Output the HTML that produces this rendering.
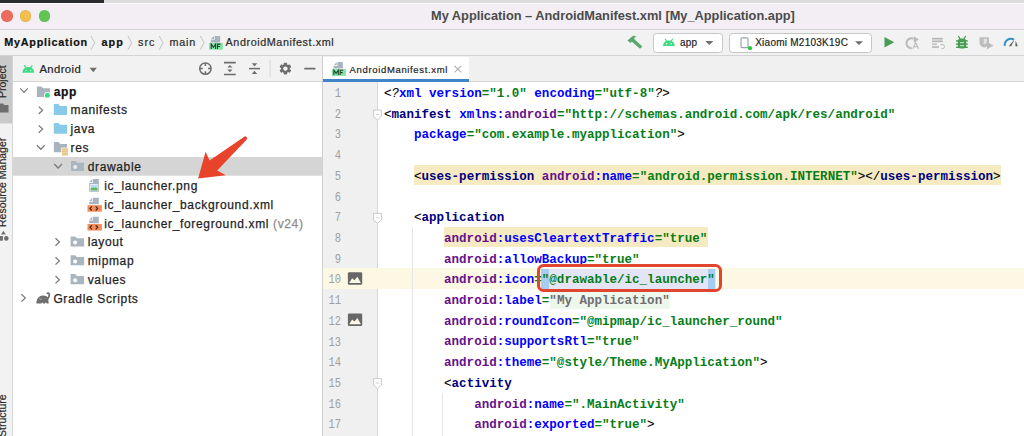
<!DOCTYPE html>
<html><head><meta charset="utf-8">
<style>
*{box-sizing:border-box;margin:0;padding:0}
html,body{width:1024px;height:436px;overflow:hidden;background:#fff;font-family:"Liberation Sans",sans-serif}
.a{position:absolute}
.t{position:absolute;white-space:pre;line-height:1}
#topdark{left:0;top:0;width:104px;height:3px;background:#2a2c30}
#toplight{left:104px;top:0;width:920px;height:3px;background:#dcdcdc}
#title{left:0;top:3px;width:1024px;height:26px;background:#f2eef4;border-top:1px solid #fbfafc}
.dot{position:absolute;width:11.5px;height:11.5px;border-radius:50%;top:10.1px;box-shadow:inset 0 0 0 0.5px rgba(0,0,0,0.08)}
#tb{left:0;top:29px;width:1024px;height:27px;background:#f2f2f2;border-top:1px solid #d6d4d8;border-bottom:1px solid #d4d4d4}
.crumb{font-size:10.8px;letter-spacing:0.57px;color:#2b2b2b;-webkit-text-stroke-width:0.2px}
.chev{position:absolute;width:6px;height:14px}
.dd{position:absolute;top:32.5px;height:20.2px;background:#fff;border:1px solid #c6c6c6;border-radius:3.5px}
#side{left:0;top:56px;width:13px;height:380px;background:#f2f2f2;border-right:1px solid #d6d6d6}
#panelhdr{left:13px;top:56px;width:310px;height:25.5px;background:#f2f2f2;border-bottom:1px solid #d4d4d4}
#tree{left:13px;top:81.5px;width:309px;height:355px;background:#fff}
#sep{left:322px;top:56px;width:1px;height:380px;background:#d0d0d0}
#tabbar{left:323px;top:56px;width:701px;height:26px;background:#f0f0f0;border-bottom:1px solid #d4d4d4}
#tab{left:323px;top:56.5px;width:146.3px;height:25.3px;background:#fff}
#tabul{left:323px;top:78.8px;width:146.3px;height:3px;background:#4083c9}
#gutter{left:323px;top:82px;width:54.5px;height:354px;background:#f0f0f0;border-right:1px solid #d6d6d6}
.ln{position:absolute;left:323px;width:18.1px;text-align:right;font-family:"Liberation Mono",monospace;font-size:12px;margin-top:0.2px;transform:scaleX(0.87);transform-origin:100% 50%;color:#9e9e9e;white-space:pre;line-height:1}
.code{position:absolute;left:383.9px;font-family:"Liberation Mono",monospace;font-size:12.545px;font-weight:bold;white-space:pre;line-height:1;color:#000}
.p{font-weight:normal;-webkit-text-stroke-width:0.1px}
.tg{color:#000080;font-weight:bold}
.at{color:#0000ff}
.ns{color:#67108a;font-weight:bold}
.vl{color:#067d17;font-weight:bold}
.gr{color:#6e6e6e}
.tree{font-size:12px;letter-spacing:0.65px;color:#1f1f1f;-webkit-text-stroke-width:0.25px}
</style></head><body>
<div class="a" id="topdark"></div>
<div class="a" id="toplight"></div>
<div class="a" id="title">
</div>
<div class="dot" style="left:1px;background:#ed6a5e"></div>
<div class="dot" style="left:19.8px;background:#f4bf4f"></div>
<div class="dot" style="left:38.6px;background:#61c554"></div>
<div class="t" style="left:431px;top:10.2px;font-size:12.8px;font-weight:bold;color:#4b4b4b">My Application – AndroidManifest.xml [My_Application.app]</div>

<div class="a" id="tb"></div>

<!--TOOLBAR-->
<div class="dd" style="left:653.1px;width:69.5px"></div>
<div class="dd" style="left:728.6px;width:143.3px"></div>
<div class="t" style="left:680px;top:37.8px;font-size:10px;letter-spacing:0.25px;color:#1f1f1f;-webkit-text-stroke-width:0.2px">app</div>
<div class="t" style="left:755.2px;top:38.2px;font-size:10px;letter-spacing:0.25px;color:#1f1f1f;-webkit-text-stroke-width:0.2px">Xiaomi M2103K19C</div>

<div class="t crumb" style="left:4.3px;top:36.8px;font-weight:bold;color:#111;letter-spacing:0.75px">MyApplication</div>
<div class="t crumb" style="left:101.4px;top:36.8px;font-weight:bold;color:#111;letter-spacing:1.1px">app</div>
<div class="t crumb" style="left:138.1px;top:36.8px;letter-spacing:0.9px">src</div>
<div class="t crumb" style="left:169.4px;top:36.8px;letter-spacing:0.85px">main</div>
<div class="t crumb" style="left:225.6px;top:36.8px">AndroidManifest.xml</div>
<svg class="a" style="left:0;top:0" width="1024" height="436" viewBox="0 0 1024 436">
 <g fill="none" stroke="#bfc3c7" stroke-width="1">
  <path d="M90.9,36 L94.7,42.8 L90.9,49.7"/>
  <path d="M127.9,36 L131.7,42.8 L127.9,49.7"/>
  <path d="M159.3,36 L163.1,42.8 L159.3,49.7"/>
  <path d="M200.3,36 L204.1,42.8 L200.3,49.7"/>
 </g>
 <!-- MF icon breadcrumb -->
 <g>
  <path d="M214.70,35.90 H220.20 V42.40 H210.90 V39.80 H214.70 Z" fill="#a9b4be"/>
  <path d="M210.90,39.10 L214.00,36.10 V39.10 Z" fill="#a9b4be"/>
  <rect x="209.1" y="43.0" width="13.8" height="6.7" fill="#84e2a7"/>
  <path d="M211.20,49.00 V44.10 L213.40,47.30 L215.60,44.10 V49.00 M217.50,49.00 V44.10 H220.50 M217.50,46.50 H220.00" fill="none" stroke="#24462e" stroke-width="1.1"/>
 </g>
 <!-- hammer -->
 <path d="M627.3,40.4 L633.2,35.7 L636.1,36.1 L630.6,43.1 Z" fill="#59a869"/>
 <path d="M632.6,37.5 L642.3,46.5 L640,48.8 L630.2,40.3 Z" fill="#59a869"/>
 <!-- android app icon -->
 <g fill="#3ddc84">
  <path d="M663.1,46 C663.1,42.6 665.5,40.5 668.9,40.5 C672.3,40.5 674.7,42.6 674.7,46 Z"/>
  <path d="M665.3,39.1 L666.7,41.3" stroke="#3ddc84" stroke-width="1.1" stroke-linecap="round"/>
  <path d="M672.5,39.1 L671.1,41.3" stroke="#3ddc84" stroke-width="1.1" stroke-linecap="round"/>
 </g>
 <circle cx="666.6" cy="43.8" r="0.75" fill="#fff"/>
 <circle cx="671.2" cy="43.8" r="0.75" fill="#fff"/>
 <path d="M705.2,40.9 H713.4 L709.3,45 Z" fill="#6e6e6e"/>
 <!-- phone icon -->
 <rect x="741" y="37.9" width="7" height="9.8" rx="1.3" fill="#fff" stroke="#9aa7b0" stroke-width="1.2"/>
 <circle cx="750" cy="48.2" r="2.1" fill="#1fcf35"/>
 <path d="M855,41.3 H863 L859,45.1 Z" fill="#6e6e6e"/>

 <!-- apply changes -->
 <path d="M911.8,48.2 A5,5 0 1 1 913.6,38.7" fill="none" stroke="#bababa" stroke-width="2"/>
 <path d="M913.9,36.2 L918.8,39.6 L913.9,42.8 Z" fill="#bababa"/>
 <path d="M912.9,48.8 L915.7,42.6 L918.5,48.8 M914,46.8 H917.4" fill="none" stroke="#bababa" stroke-width="1.1"/>
 <!-- apply code changes -->
 <rect x="932" y="37.9" width="10.7" height="4.2" fill="#d2d2d2"/>
 <rect x="932" y="37.9" width="10.7" height="1.1" fill="#b5b5b5"/>
 <rect x="932" y="41" width="10.7" height="1.1" fill="#b5b5b5"/>
 <rect x="932" y="43.5" width="4.9" height="1.3" fill="#b5b5b5"/>
 <rect x="932" y="46.2" width="7" height="1.6" fill="#b5b5b5"/>
 <path d="M940.3,44.6 H943 A2,2 0 0 1 943,48.5 H941.5" fill="none" stroke="#bdbdbd" stroke-width="1"/>
 <!-- debug bug -->
 <g fill="#499c54">
  <rect x="957.8" y="38.6" width="8.4" height="10" rx="3"/>
  <rect x="956" y="40.2" width="11.8" height="1.4"/>
  <rect x="956" y="43.4" width="11.8" height="1.4"/>
  <rect x="956" y="46.6" width="11.8" height="1.4"/>
  <path d="M958.4,36 L960,38.8 M965.6,36 L964,38.8" stroke="#499c54" stroke-width="1.3"/>
 </g>
 <rect x="960" y="42.2" width="4" height="1" fill="#cfe6d2"/>
 <rect x="960" y="45.2" width="4" height="1" fill="#cfe6d2"/>
 <!-- attach -->
 <path d="M979.6,37.2 H989 V43 C989,45.5 986.5,47 984.3,47.6 C982,47 979.6,45.5 979.6,43 Z" fill="#bcbcbc"/>
 <path d="M983.6,38.8 H987 V42 L985.5,44 H983.6 Z" fill="#e2e2e2"/>
 <path d="M986.9,41.9 L993.5,45.6 L986.9,49.4 Z" fill="#bcbcbc"/>
 <!-- profiler -->
 <path d="M1004.8,46 A6.3,6.3 0 0 1 1014,39.5" fill="none" stroke="#3592c4" stroke-width="2"/>
 <path d="M1008.8,46.2 L1014.6,39.3 L1011.2,46.2 Z" fill="#5e5e5e"/>
 <path d="M1015.6,40.8 L1017.8,46.2 H1015.4 Z" fill="#5e5e5e"/>
 <!-- run -->
 <path d="M884.5,37 L894.2,42.3 L884.5,47.6 Z" fill="#499c54"/>
</svg>
<div class="a" id="side"></div>
<div class="a" id="panelhdr"></div>
<div class="a" id="tree"></div>
<div class="a" id="sep"></div>
<div class="a" id="tabbar"></div>
<div class="a" id="tab"></div>
<div class="a" id="tabul"></div>
<div class="a" id="gutter"></div>
<svg class="a" style="left:0;top:0" width="1024" height="436" viewBox="0 0 1024 436">
 <!-- sidebar -->
 <rect x="0" y="56" width="12.2" height="67.4" fill="#c9c9c9"/>
 <path d="M0,103.6 H3 L4.2,104.9 H8.5 V112.4 H0 Z" fill="#6e6e6e"/>
 <path d="M1,234.6 L3.4,230.8 L5.8,234.6 Z" fill="#6e6e6e"/>
 <rect x="0" y="236" width="2.9" height="4.7" fill="#6e6e6e"/>
 <circle cx="6.3" cy="238.4" r="2.3" fill="#6e6e6e"/>
 <!-- panel header icons -->
 <g fill="#3ddc84">
  <path d="M22.5,72.8 C22.5,69.3 25,67.1 28.3,67.1 C31.6,67.1 34.1,69.3 34.1,72.8 Z"/>
  <path d="M24.6,65.6 L26,67.9 M32,65.6 L30.6,67.9" stroke="#3ddc84" stroke-width="1.2" stroke-linecap="round"/>
 </g>
 <circle cx="26" cy="70.4" r="0.75" fill="#c5f3d9"/>
 <circle cx="30.6" cy="70.4" r="0.75" fill="#c5f3d9"/>
 <path d="M89.6,67.7 H96.9 L93.25,72.3 Z" fill="#6e6e6e"/>
 <g fill="none" stroke="#6e6e6e" stroke-width="1.3">
  <circle cx="205.4" cy="68.6" r="5.7" stroke-width="1.5"/>
  <path d="M205.4,63 V66 M205.4,71.2 V74.2 M199.8,68.6 H202.8 M208,68.6 H211" stroke-width="1.5"/>
  <path d="M224,62.6 H235.8 M224,74.5 H235.8" stroke-width="1.7"/>
  <path d="M249,68.6 H260" stroke-width="1.5"/>
 </g>
 <g fill="#6e6e6e">
  <path d="M227.3,67.6 L229.9,64.9 L232.5,67.6 Z"/>
  <path d="M227.3,69.6 L229.9,72.3 L232.5,69.6 Z"/>
  <path d="M251.8,63.2 L257.2,63.2 L254.5,66.4 Z"/>
  <path d="M251.8,74 L257.2,74 L254.5,70.8 Z"/>
 </g>
 <rect x="269.6" y="59.8" width="1" height="17.8" fill="#d8d8d8"/>
 <g transform="translate(285.4,68.6)" fill="#6e6e6e">
  <circle r="4.3"/>
  <rect x="-1.7" y="-5.9" width="3.4" height="11.8" rx="0.8"/><rect x="-1.7" y="-5.9" width="3.4" height="11.8" rx="0.8" transform="rotate(60)"/><rect x="-1.7" y="-5.9" width="3.4" height="11.8" rx="0.8" transform="rotate(120)"/>
  <circle r="2.2" fill="#f2f2f2"/>
 </g>
 <rect x="304.2" y="67.8" width="11.3" height="1.7" rx="0.6" fill="#6e6e6e"/>
 <!-- tab MF icon -->
 <g>
  <path d="M337.40,62.00 H342.90 V68.50 H333.60 V65.90 H337.40 Z" fill="#a9b4be"/>
  <path d="M333.60,65.20 L336.70,62.20 V65.20 Z" fill="#a9b4be"/>
  <rect x="331.8" y="69.1" width="14.1" height="6.8" fill="#84e2a7"/>
  <path d="M333.90,75.10 V70.20 L336.10,73.40 L338.30,70.20 V75.10 M340.20,75.10 V70.20 H343.20 M340.20,72.60 H342.70" fill="none" stroke="#24462e" stroke-width="1.1"/>
 </g>
 <path d="M454.5,66 L461.2,72.3 M461.2,66 L454.5,72.3" stroke="#b3b3b3" stroke-width="1.1"/>
 <!-- tree selection -->
 <rect x="13" y="157" width="309" height="18.7" fill="#d5d5d5"/>
 <!-- chevrons -->
 <g fill="none" stroke="#7a7a7a" stroke-width="1.25">
  <path d="M20.3,88.4 L24,92.4 L27.7,88.4"/>
  <path d="M38.7,106.6 L42.6,110.3 L38.7,114"/>
  <path d="M38.7,125.4 L42.6,129.1 L38.7,132.8"/>
  <path d="M36.9,145.3 L40.8,149.3 L44.7,145.3"/>
  <path d="M54.2,164 L58.1,168 L62,164"/>
  <path d="M55.5,238.3 L59.4,242 L55.5,245.7"/>
  <path d="M55.5,257.2 L59.4,260.9 L55.5,264.6"/>
  <path d="M55.5,276 L59.4,279.7 L55.5,283.4"/>
  <path d="M21.3,294.2 L25.3,297.9 L21.3,301.6"/>
 </g>
 <!-- folders -->
 <path d="M36.9,86.6 H41.5 L43,88.2 H50 V96.9 H36.9 Z" fill="#a8b3bd"/>
 <circle cx="47.4" cy="95.3" r="3.4" fill="#fff"/>
 <circle cx="47.4" cy="95.3" r="2.5" fill="#3ddc84"/>
 <path d="M53.8,104.1 H58.4 L60.1,105.9 H67 V114.9 H53.8 Z" fill="#88cbe8"/>
 <path d="M53.8,122.95 H58.4 L60.1,124.75 H67 V133.75 H53.8 Z" fill="#88cbe8"/>
 <path d="M53.9,142.1 H58.5 L60.2,143.9 H67 V152.2 H53.9 Z" fill="#a8b3bd"/>
 <rect x="61.2" y="147.6" width="7.4" height="8.5" fill="#fff"/>
 <rect x="61.9" y="148.3" width="6" height="7.1" fill="#e9c27b"/>
 <path d="M61.9,150.6 H67.9 M61.9,152.9 H67.9" stroke="#f6e6c6" stroke-width="0.7"/>
 <g fill="#a9b5bf">
  <path d="M70.9,160.9 H75.5 L77.2,162.7 H84 V171 H70.9 Z"/>
  <path d="M70.6,236.4 H75.2 L76.9,238.2 H84.1 V246.5 H70.6 Z"/>
  <path d="M70.6,255.25 H75.2 L76.9,257.05 H84.1 V265.35 H70.6 Z"/>
  <path d="M70.6,274.1 H75.2 L76.9,275.9 H84.1 V284.2 H70.6 Z"/>
 </g>
 <g fill="#fff">
  <circle cx="75.2" cy="167.1" r="2" fill="#e9ecee"/>
  <circle cx="75.1" cy="242.6" r="2"/>
  <circle cx="75.1" cy="261.45" r="2"/>
  <circle cx="75.1" cy="280.3" r="2"/>
 </g>
 <!-- png icon -->
 <path d="M92.9,179.1 H98.8 V191.7 H89.2 V182.9 H92.9 Z" fill="#a9b4be"/>
 <path d="M89.2,182.2 L92.2,179.3 V182.2 Z" fill="#a9b4be"/>
 <rect x="90.2" y="184" width="7.6" height="6.9" fill="#f4f6f7"/>
 <rect x="90.8" y="184.7" width="6.7" height="5.7" fill="#b5def0"/>
 <path d="M90.8,190.4 V188.6 C91.8,187.6 93,187.2 94.2,188 C95.3,187.2 96.5,187.4 97.5,188.2 V190.4 Z" fill="#62b85a"/>
 <!-- xml icons -->
 <g>
  <path d="M92.90,197.80 H98.80 V204.30 H89.20 V201.70 H92.90 Z" fill="#a9b4be"/>
  <path d="M89.20,201.00 L92.20,198.00 V201.00 Z" fill="#a9b4be"/>
  <rect x="87.5" y="205.2" width="14.4" height="6.5" fill="#f28b5b"/>
  <path d="M91.90,206.40 L89.90,208.45 L91.90,210.50 M95.70,206.40 L97.70,208.45 L95.70,210.50" fill="none" stroke="#4a220f" stroke-width="1.1"/>
 </g>
 <g>
  <path d="M92.90,216.65 H98.80 V223.15 H89.20 V220.55 H92.90 Z" fill="#a9b4be"/>
  <path d="M89.20,219.85 L92.20,216.85 V219.85 Z" fill="#a9b4be"/>
  <rect x="87.5" y="224.05" width="14.4" height="6.5" fill="#f28b5b"/>
  <path d="M91.90,225.25 L89.90,227.30 L91.90,229.35 M95.70,225.25 L97.70,227.30 L95.70,229.35" fill="none" stroke="#4a220f" stroke-width="1.1"/>
 </g>
 <!-- gradle elephant -->
 <path d="M36.4,303.6 C36.4,299 38.8,295.7 42.6,295.5 C45.2,295.4 46.9,296.2 48,297.4 L48.7,303.6 L46.8,303.6 L45.9,302.2 L45,303.6 L43.1,303.6 L42.2,302.2 L41.3,303.6 Z" fill="#6d6d6d"/>
 <path d="M47.2,299.5 C48.5,297.5 49.6,295.8 49.3,294.3 C49,293 47.6,292.8 46.9,293.9" fill="none" stroke="#6d6d6d" stroke-width="1.7"/>
 <path d="M39.3,298.6 L40.6,299.4 L41.8,298.6 M45,298 L45.4,298.6" fill="none" stroke="#d9d9d9" stroke-width="0.7"/>
 <!-- arrow -->
 <path d="M198.1,178.4 L205.6,151.8 L209.6,160.6 L243.9,136.9 A1.95,1.95 0 0 1 246.5,139.8 L217.2,170.4 L225.8,175.2 Z" fill="#e8432b"/>
</svg>
<div class="t tree" style="left:53.8px;top:85.54px;font-weight:bold;color:#111;letter-spacing:0.6px;">app</div>
<div class="t tree" style="left:70.5px;top:104.40px;">manifests</div>
<div class="t tree" style="left:70.5px;top:123.25px;">java</div>
<div class="t tree" style="left:70.5px;top:142.11px;">res</div>
<div class="t tree" style="left:87.7px;top:160.96px;">drawable</div>
<div class="t tree" style="left:104.2px;top:179.82px;">ic_launcher.png</div>
<div class="t tree" style="left:104.2px;top:198.67px;">ic_launcher_background.xml</div>
<div class="t tree" style="left:104.2px;top:217.53px;">ic_launcher_foreground.xml</div>
<div class="t tree" style="left:87.7px;top:236.38px;">layout</div>
<div class="t tree" style="left:87.7px;top:255.24px;">mipmap</div>
<div class="t tree" style="left:87.7px;top:274.09px;">values</div>
<div class="t tree" style="left:53.4px;top:292.95px;">Gradle Scripts</div>
<div class="t tree" style="left:273px;top:217.53px;color:#8c8c8c">(v24)</div>
<div class="t" style="left:39.4px;top:64px;font-size:11.3px;letter-spacing:0.4px;color:#1f1f1f;-webkit-text-stroke-width:0.2px">Android</div>
<div class="t" style="left:349.6px;top:65.2px;font-size:9.5px;letter-spacing:0.65px;color:#1f1f1f;-webkit-text-stroke-width:0.2px">AndroidManifest.xml</div>
<div class="t" style="left:-3.3px;top:98px;font-size:10.5px;color:#2b2b2b;-webkit-text-stroke-width:0.2px;transform:rotate(-90deg);transform-origin:0 0">Project</div>
<div class="t" style="left:-3.3px;top:227px;font-size:10.5px;color:#2b2b2b;-webkit-text-stroke-width:0.2px;transform:rotate(-90deg);transform-origin:0 0">Resource Manager</div>
<div class="t" style="left:-3.3px;top:437.3px;font-size:10.5px;color:#2b2b2b;-webkit-text-stroke-width:0.2px;transform:rotate(-90deg);transform-origin:0 0">Structure</div>


<div class="a" style="left:323px;top:268.4px;width:701px;height:20.5px;background:#fcf8e4"></div>
<div class="a" style="left:414px;top:165.1px;width:587.1px;height:20px;background:#f5eac2"></div>
<div class="a" style="left:444.1px;top:227.1px;width:263.5px;height:20px;background:#f5eac2"></div>

<div class="a" style="left:549.5px;top:289px;width:120.5px;height:20px;background:#edf7ec"></div>
<div class="a" style="left:541px;top:268.5px;width:174.5px;height:20.3px;background:#e4e4f7"></div>
<div class="a" style="left:541px;top:268.5px;width:7.6px;height:20.3px;background:#a8cdf5"></div>
<div class="a" style="left:707.5px;top:268.5px;width:7.6px;height:20.3px;background:#a8cdf5"></div>
<div class="a" style="left:412px;top:227px;width:1px;height:209px;background:#e6e6e6"></div>
<div class="a" style="left:442px;top:392.5px;width:1px;height:44px;background:#e6e6e6"></div>
<div class="ln" style="top:87.86px">1</div>
<div class="ln" style="top:108.57px">2</div>
<div class="ln" style="top:129.28px">3</div>
<div class="ln" style="top:149.99px">4</div>
<div class="ln" style="top:170.70px">5</div>
<div class="ln" style="top:191.41px">6</div>
<div class="ln" style="top:212.12px">7</div>
<div class="ln" style="top:232.83px">8</div>
<div class="ln" style="top:253.54px">9</div>
<div class="ln" style="top:274.25px">10</div>
<div class="ln" style="top:294.96px">11</div>
<div class="ln" style="top:315.67px">12</div>
<div class="ln" style="top:336.38px">13</div>
<div class="ln" style="top:357.09px">14</div>
<div class="ln" style="top:377.80px">15</div>
<div class="ln" style="top:398.51px">16</div>
<div class="ln" style="top:419.22px">17</div>
<div class="code" style="top:87.86px"><span class="p">&lt;</span><span class="p" style="font-style:italic">?</span><span class="at">xml</span> <span class="at">version</span><span class="vl">="1.0"</span> <span class="at">encoding</span><span class="vl">="utf-8"</span><span class="p" style="font-style:italic">?</span><span class="p">&gt;</span></div>
<div class="code" style="top:108.57px"><span class="p">&lt;</span><span class="tg">manifest</span> <span class="at">xmlns:</span><span class="ns">android</span><span class="vl">="http://schemas.android.com/apk/res/android"</span></div>
<div class="code" style="top:129.28px">    <span class="at">package</span><span class="vl">="com.example.myapplication"</span><span class="p">&gt;</span></div>
<div class="code" style="top:149.99px"></div>
<div class="code" style="top:170.70px">    <span class="p">&lt;</span><span class="tg">uses-permission</span> <span class="ns">android</span><span class="at">:name</span><span class="vl">="android.permission.INTERNET"</span><span class="p">&gt;&lt;/</span><span class="tg">uses-permission</span><span class="p">&gt;</span></div>
<div class="code" style="top:191.41px"></div>
<div class="code" style="top:212.12px">    <span class="p">&lt;</span><span class="tg">application</span></div>
<div class="code" style="top:232.83px">        <span class="ns">android</span><span class="at">:usesCleartextTraffic</span><span class="vl">="true"</span></div>
<div class="code" style="top:253.54px">        <span class="ns">android</span><span class="at">:allowBackup</span><span class="vl">="true"</span></div>
<div class="code" style="top:274.25px">        <span class="ns">android</span><span class="at">:icon</span><span class="vl">="@drawable/ic_launcher"</span></div>
<div class="code" style="top:294.96px">        <span class="ns">android</span><span class="at">:label</span><span class="vl">=</span><span class="gr">"My Application"</span></div>
<div class="code" style="top:315.67px">        <span class="ns">android</span><span class="at">:roundIcon</span><span class="vl">="@mipmap/ic_launcher_round"</span></div>
<div class="code" style="top:336.38px">        <span class="ns">android</span><span class="at">:supportsRtl</span><span class="vl">="true"</span></div>
<div class="code" style="top:357.09px">        <span class="ns">android</span><span class="at">:theme</span><span class="vl">="@style/Theme.MyApplication"</span><span class="p">&gt;</span></div>
<div class="code" style="top:377.80px">        <span class="p">&lt;</span><span class="tg">activity</span></div>
<div class="code" style="top:398.51px">            <span class="ns">android</span><span class="at">:name</span><span class="vl">=".MainActivity"</span></div>
<div class="code" style="top:419.22px">            <span class="ns">android</span><span class="at">:exported</span><span class="vl">="true"</span><span class="p">&gt;</span></div>

<div class="a" style="left:536.8px;top:264.3px;width:185.6px;height:27.9px;border:3px solid #e0452d;border-radius:6.5px"></div>

<svg class="a" style="left:0;top:0" width="1024" height="436" viewBox="0 0 1024 436">
 <path d="M373.6,110.02 H381.4 V116.62 L377.5,120.02 L373.6,116.62 Z" fill="#fff" stroke="#c4c4c4" stroke-width="0.9"/>
 <rect x="375.8" y="114.02" width="3.4" height="0.9" fill="#d0d0d0"/>
 <path d="M373.6,213.32 H381.4 V219.92 L377.5,223.32 L373.6,219.92 Z" fill="#fff" stroke="#c4c4c4" stroke-width="0.9"/>
 <rect x="375.8" y="217.32" width="3.4" height="0.9" fill="#d0d0d0"/>
 <path d="M373.6,378.60 H381.4 V385.20 L377.5,388.60 L373.6,385.20 Z" fill="#fff" stroke="#c4c4c4" stroke-width="0.9"/>
 <rect x="375.8" y="382.60" width="3.4" height="0.9" fill="#d0d0d0"/>
 <g transform="translate(0,0.00)"><rect x="347.9" y="272.3" width="14.3" height="12.4" rx="1.2" fill="#676767"/>
 <path d="M349.2,282.9 L352.1,278.3 L354.4,280.3 L357.4,276.7 L360.9,282.9 Z" fill="#fcf8e6"/></g>
 <g transform="translate(0,41.32)"><rect x="347.9" y="272.3" width="14.3" height="12.4" rx="1.2" fill="#676767"/>
 <path d="M349.2,282.9 L352.1,278.3 L354.4,280.3 L357.4,276.7 L360.9,282.9 Z" fill="#fcf8e6"/></g>
</svg>
</body></html>
